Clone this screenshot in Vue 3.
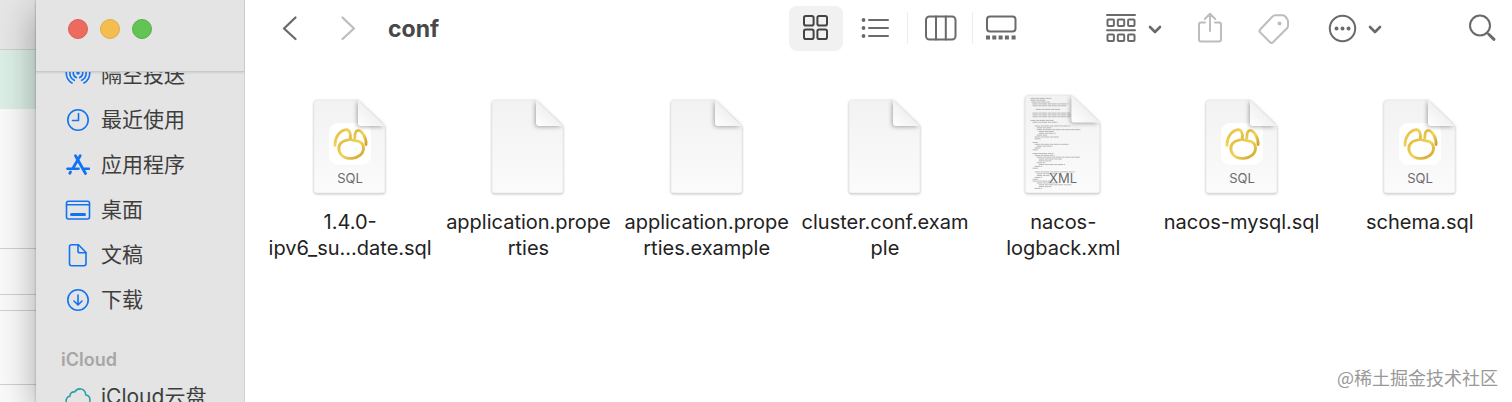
<template>
  <div class="desktop">
    <div class="behind">
      <div class="behind-title"></div>
      <div class="behind-banner"></div>
      <div class="behind-row tall"></div>
      <div class="behind-row"></div>
      <div class="behind-row thin"></div>
      <div class="behind-row mid"></div>
    </div>

    <div class="window">
      <aside class="sidebar">
        <div class="traffic">
          <button class="dot red" aria-label="关闭"></button>
          <button class="dot yellow" aria-label="最小化"></button>
          <button class="dot green" aria-label="缩放"></button>
        </div>
        <nav class="places">
          <a v-for="place in places" :key="place.name" class="place" href="#">
            <svg class="place-icon" viewBox="0 0 26 26">
              <path v-for="p in place.paths" :key="p.d" :d="p.d" :stroke-width="p.w || 1.6" />
            </svg>
            <span>{{ place.name }}</span>
          </a>
          <h2 class="section">iCloud</h2>
          <a class="place" href="#">
            <svg class="place-icon cloud" viewBox="0 0 26 26">
              <path
                stroke-width="1.6"
                d="M6.5 21C2.5 21 .8 18.5 1.2 16C1.5 13.5 3.8 12.2 5 12.3C4.8 9.5 7 7.5 9.8 8C11 5.5 13.5 4.6 16 5C19.3 5.6 20.6 8 20.8 11C23.5 11.3 25 13.4 25 16C25 19 22.8 21 20 21Z"
              />
            </svg>
            <span>iCloud云盘</span>
          </a>
        </nav>
      </aside>

      <main class="content">
        <header class="toolbar">
          <button class="tool" aria-label="返回">
            <svg width="36" height="36" viewBox="0 0 36 36"><path stroke-width="2.3" d="M23.5 7.5L12 18.5L23.5 29" /></svg>
          </button>
          <button class="tool disabled forward" aria-label="前进">
            <svg width="36" height="36" viewBox="0 0 36 36"><path stroke-width="2.3" d="M12.5 7.5L24 18.5L12.5 29" /></svg>
          </button>
          <h1 class="title">conf</h1>

          <div class="views">
            <button class="tool view active" aria-label="图标">
              <svg width="36" height="36" viewBox="0 0 36 36">
                <rect x="6" y="6" width="9.6" height="9.6" rx="1.8" />
                <rect x="19.4" y="6" width="9.6" height="9.6" rx="1.8" />
                <rect x="6" y="19.4" width="9.6" height="9.6" rx="1.8" />
                <rect x="19.4" y="19.4" width="9.6" height="9.6" rx="1.8" />
              </svg>
            </button>
            <button class="tool view" aria-label="列表">
              <svg width="36" height="36" viewBox="0 0 36 36">
                <path d="M12 10H31M12 18H31M12 26H31" />
                <path stroke-width="3.8" d="M6.5 10h.01M6.5 18h.01M6.5 26h.01" />
              </svg>
            </button>
            <span class="divider"></span>
            <button class="tool view" aria-label="分栏">
              <svg width="36" height="36" viewBox="0 0 36 36">
                <rect x="4" y="6.5" width="29.5" height="23" rx="3.5" />
                <path d="M14 6.5V29.5M23.8 6.5V29.5" />
              </svg>
            </button>
            <span class="divider"></span>
            <button class="tool view gallery" aria-label="画廊">
              <svg width="36" height="36" viewBox="0 0 36 36">
                <rect x="4" y="6.5" width="28.5" height="15" rx="3" />
                <path class="square" stroke-width="4" d="M3 27.5h4M9.3 27.5h4M15.6 27.5h4M21.9 27.5h4M28.6 27.5h4" />
              </svg>
            </button>
          </div>

          <div class="actions">
            <button class="tool menu" aria-label="分组">
              <svg width="30" height="36" viewBox="0 0 30 36">
                <path d="M1 5H29M1 20.3H29" />
                <rect x="1.5" y="9.5" width="6.4" height="6.6" rx="1" />
                <rect x="11.8" y="9.5" width="6.4" height="6.6" rx="1" />
                <rect x="22.1" y="9.5" width="6.4" height="6.6" rx="1" />
                <rect x="1.5" y="24.5" width="6.4" height="6.6" rx="1" />
                <rect x="11.8" y="24.5" width="6.4" height="6.6" rx="1" />
                <rect x="22.1" y="24.5" width="6.4" height="6.6" rx="1" />
              </svg>
              <svg width="14" height="36" viewBox="0 0 14 36"><path stroke-width="2.6" d="M2 17L7 22L12 17" /></svg>
            </button>
            <button class="tool disabled" aria-label="共享">
              <svg width="32" height="36" viewBox="0 0 32 36">
                <path d="M11 12.5H7Q5 12.5 5 14.5V29.5Q5 31.5 7 31.5H25Q27 31.5 27 29.5V14.5Q27 12.5 25 12.5H21M16 21V4M10.8 9L16 3.7L21.2 9" />
              </svg>
            </button>
            <button class="tool disabled" aria-label="标签">
              <svg width="32" height="36" viewBox="0 0 32 36">
                <path d="M17 5.2H25Q26 5.2 27 6.2L29.2 9.2Q30 10.2 30 11.5V15.8Q30 17.2 29 18.2L15 32.2Q13.5 33.6 12 32.2L2.2 22.4Q.8 21 2.2 19.5L14.5 6.5Q15.5 5.2 17 5.2Z" />
                <path stroke-width="4" d="M21.5 13.5h.01" />
              </svg>
            </button>
            <button class="tool menu more" aria-label="更多">
              <svg width="30" height="36" viewBox="0 0 30 36">
                <circle cx="14.5" cy="18.5" r="12.7" />
                <path stroke-width="4" d="M8.5 18.5h.01M14.5 18.5h.01M20.5 18.5h.01" />
              </svg>
              <svg width="14" height="36" viewBox="0 0 14 36"><path stroke-width="2.6" d="M2 17L7 22L12 17" /></svg>
            </button>
            <button class="tool search" aria-label="搜索">
              <svg width="36" height="36" viewBox="0 0 36 36">
                <circle cx="16" cy="15.5" r="10" />
                <path d="M23.2 22.8L25 24.5" />
                <path stroke-width="3" d="M25 24.5L30 29.3" />
              </svg>
            </button>
          </div>
        </header>

        <ul class="files">
          <li v-for="file in files" :key="file.lines.join('')" class="file">
            <svg class="file-icon" viewBox="0 0 80 100">
              <defs>
                <linearGradient id="paper" x1="0" y1="0" x2="0" y2="1">
                  <stop offset="0" stop-color="#f2f2f2" />
                  <stop offset="1" stop-color="#fbfbfb" />
                </linearGradient>
                <linearGradient id="fold" x1="0" y1="1" x2="0.6" y2="0.4">
                  <stop offset="0" stop-color="#ffffff" />
                  <stop offset="1" stop-color="#eeeeee" />
                </linearGradient>
                <linearGradient id="gold" x1="0" y1="0" x2="1" y2="1">
                  <stop offset="0" stop-color="#e0b840" />
                  <stop offset="0.5" stop-color="#f0d458" />
                  <stop offset="1" stop-color="#cf9f30" />
                </linearGradient>
              </defs>
              <g :class="{ big: file.kind === 'XML' }">
                <path class="paper" d="M7 4H47.5L75 30V94.5Q75 97 72.5 97H6.5Q4 97 4 94.5V7Q4 4 7 4Z" />
                <template v-if="file.kind === 'XML'">
                  <path v-for="(row, i) in codeRows" :key="i" class="code" :d="`M${row[0]} ${7 + i * 1.75}h${row[1]}`" />
                </template>
                <template v-if="file.kind === 'SQL'">
                  <rect class="tile" x="19" y="27" width="42" height="42" rx="9" />
                  <path class="paw" d="M25 49.3C24.8 42 29.5 34.5 35.5 33.8C39.6 33.4 40.8 37 40.3 43" />
                  <path class="paw" d="M44.8 42C44.8 38 46 34.4 48.3 34.4C51.5 34.6 56.8 42 56 48.5" />
                  <path class="paw" d="M40.3 43.2C37.5 44.6 33.5 43.8 30.6 47.3C27 52 29.2 58.2 34 60.9C38.5 63.2 45.5 62.8 49.8 59.4C54.2 55.8 54.6 50.3 51.5 47C48.3 43.8 44 45.2 40.3 43.2Z" />
                </template>
                <path class="fold" d="M48 4L75 30H51Q48 30 48 27Z" />
              </g>
              <text v-if="file.kind" class="kind" x="40" y="87">{{ file.kind }}</text>
            </svg>
            <p class="name">
              <span v-for="line in file.lines" :key="line">{{ line }}</span>
            </p>
          </li>
        </ul>
        <p class="watermark">@稀土掘金技术社区</p>
      </main>
    </div>
  </div>
</template>

<script setup>
const places = [
  {
    name: "隔空投送",
    paths: [
      { d: "M7 21A11.6 11.6 0 0 1 7 1M19 1A11.6 11.6 0 0 1 19 21" },
      { d: "M9.3 18.3A8.2 8.2 0 0 1 9.3 3.7M16.7 3.7A8.2 8.2 0 0 1 16.7 18.3" },
      { d: "M11.3 15.6A5 5 0 0 1 11.3 6.4M14.7 6.4A5 5 0 0 1 14.7 15.6" },
      { d: "M13 11h.01", w: 3.4 },
    ],
  },
  {
    name: "最近使用",
    paths: [
      { d: "M23.2 13A10.2 10.2 0 1 1 2.8 13A10.2 10.2 0 1 1 23.2 13Z" },
      { d: "M13.5 6.5V13.5H7.5" },
    ],
  },
  {
    name: "应用程序",
    paths: [
      { d: "M10.5 3.8L20.5 21.5M15.2 3.8L7.8 16.5M5.5 20L4.8 21.2", w: 2.8 },
      { d: "M2.5 16.8H13.5M19 16.8H23.8", w: 2.6 },
    ],
  },
  {
    name: "桌面",
    paths: [
      { d: "M3.5 4.2H22.5Q24.5 4.2 24.5 6.2V20Q24.5 22 22.5 22H3.5Q1.5 22 1.5 20V6.2Q1.5 4.2 3.5 4.2Z" },
      { d: "M1.5 7.8H24.5" },
      { d: "M6.5 17.6H19.5", w: 3 },
    ],
  },
  {
    name: "文稿",
    paths: [
      { d: "M6.5 2.7H13.5L21 10.5V21.5Q21 23.7 19 23.7H6.5Q4.5 23.7 4.5 21.5V4.7Q4.5 2.7 6.5 2.7Z" },
      { d: "M13 3V9Q13 10.8 14.8 10.8H20.5" },
    ],
  },
  {
    name: "下载",
    paths: [
      { d: "M23.2 13A10.2 10.2 0 1 1 2.8 13A10.2 10.2 0 1 1 23.2 13Z" },
      { d: "M13 8V17.8M9 14L13 18L17 14" },
    ],
  },
];

const files = [
  { kind: "SQL", lines: ["1.4.0-", "ipv6_su…date.sql"] },
  { kind: "", lines: ["application.prope", "rties"] },
  { kind: "", lines: ["application.prope", "rties.example"] },
  { kind: "", lines: ["cluster.conf.exam", "ple"] },
  { kind: "XML", lines: ["nacos-", "logback.xml"] },
  { kind: "SQL", lines: ["nacos-mysql.sql"] },
  { kind: "SQL", lines: ["schema.sql"] },
];

// [indent, length] of each tiny line on the xml preview
const codeRows = [
  [9, 20], [9, 14], [10, 18], [11, 34], [11, 32], [11, 0], [14, 23], [14, 0],
  [11, 36], [11, 38], [11, 36], [9, 0], [9, 22], [11, 24], [9, 0], [13, 34],
  [15, 14], [15, 42], [17, 14], [17, 16], [15, 10], [13, 23], [13, 6], [9, 0],
  [11, 5], [13, 33], [15, 15], [13, 6], [11, 5], [9, 0], [11, 20], [13, 19],
  [15, 41], [17, 22], [17, 12], [15, 8], [17, 25], [13, 7], [11, 5], [11, 0],
  [13, 38], [15, 18], [15, 12], [13, 7], [11, 6], [11, 18], [15, 20], [17, 31],
  [17, 12], [13, 7],
];
</script>

<style>
body {
  overflow: hidden;
}
</style>

<style scoped>
.desktop {
  display: flex;
  height: 100vh;
  overflow: hidden;
  background: #fafafa;
  font-family: Inter, "Noto Sans CJK SC", sans-serif;
}
h1,
h2,
p,
ul {
  margin: 0;
  padding: 0;
}
button {
  border: 0;
  padding: 0;
  background: none;
}
svg {
  display: block;
  flex: none;
}
.behind {
  flex: none;
  width: 36px;
}
.behind div {
  box-sizing: border-box;
  border-bottom: 1px solid #cfcfcf;
}
.behind .behind-title {
  height: 50px;
  background: #e6e6e6;
}
.behind .behind-banner {
  height: 59px;
  background: #dcefe6;
  border-bottom: 0;
}
.behind-row {
  height: 46px;
}
.behind .tall {
  height: 140px;
}
.behind .thin {
  height: 16px;
}
.behind .mid {
  height: 74px;
}
.window {
  position: relative;
  flex: 1;
  min-width: 0;
  display: flex;
  box-shadow: 0 0 2px rgba(0, 0, 0, 0.3), 0 10px 36px rgba(0, 0, 0, 0.34);
}
.sidebar {
  flex: none;
  display: flex;
  flex-direction: column;
  box-sizing: border-box;
  width: 209px;
  background: #e4e4e4;
  border-right: 1px solid #d2d2d2;
}
.traffic {
  flex: none;
  display: flex;
  gap: 12px;
  box-sizing: border-box;
  height: 72px;
  padding: 19px 32px;
  border-bottom: 1px solid #c9c9c9;
  box-shadow: 0 1px 2px rgba(0, 0, 0, 0.1);
}
.dot {
  box-sizing: border-box;
  width: 20px;
  height: 20px;
  border-radius: 50%;
}
.red {
  background: #ec6a5e;
  border: 1px solid #dc5f55;
}
.yellow {
  background: #f4bd4f;
  border: 1px solid #e2ab45;
}
.green {
  background: #61c454;
  border: 1px solid #55b149;
}
.places {
  flex: 1;
  min-height: 0;
  overflow: hidden;
}
.place {
  display: flex;
  align-items: center;
  gap: 10px;
  height: 45px;
  padding-left: 29px;
  color: #3e3e3e;
  font-size: 21px;
  line-height: 30px;
  text-decoration: none;
}
.place:first-child {
  margin-top: -20px;
}
.place-icon {
  width: 26px;
  height: 26px;
  fill: none;
  stroke: #1273f2;
  stroke-linecap: round;
  stroke-linejoin: round;
}
.cloud {
  stroke: #2c9fa8;
}
.section {
  margin-top: 24px;
  padding-left: 25px;
  color: #a6a6a6;
  font-size: 18px;
  font-weight: 600;
  line-height: 28px;
}
.content {
  flex: 1;
  min-width: 0;
  background: #fff;
}
.toolbar {
  display: flex;
  align-items: center;
  height: 56px;
  padding: 0 12px 0 27px;
}
.tool {
  display: flex;
  align-items: center;
  justify-content: center;
}
.tool svg {
  fill: none;
  stroke: #6a6a6a;
  stroke-width: 2;
  stroke-linecap: round;
  stroke-linejoin: round;
}
.tool.disabled svg {
  stroke: #bdbdbd;
}
.tool .square {
  stroke-linecap: butt;
}
.forward {
  margin: 0 22px;
}
.title {
  padding-top: 2px;
  color: #484848;
  font-size: 23px;
  font-weight: 700;
  line-height: 32px;
}
.views {
  display: flex;
  align-items: center;
  gap: 5px;
  margin-left: auto;
}
.view {
  width: 54px;
  height: 45px;
  border-radius: 8px;
}
.view.active {
  background: #f1f1f1;
}
.view.active svg {
  stroke: #444;
}
.gallery {
  width: 46px;
}
.divider {
  width: 1px;
  height: 32px;
  background: #ececec;
}
.actions {
  display: flex;
  align-items: center;
  gap: 32px;
  margin-left: 82px;
}
.menu {
  gap: 12px;
}
.more {
  gap: 10px;
  margin-left: 6px;
}
.search {
  margin-left: 50px;
}
.files {
  display: grid;
  grid-template-columns: repeat(7, 1fr);
  padding: 40px 3px 0 16px;
  list-style: none;
}
.file {
  display: flex;
  flex-direction: column;
  align-items: center;
}
.file-icon {
  width: 80px;
  height: 100px;
  overflow: visible;
}
.big {
  transform: scale(1.05);
  transform-origin: 40px 99px;
}
.paper {
  fill: url(#paper);
  stroke: #e6e6e6;
  stroke-width: 0.6;
  filter: drop-shadow(0 1px 1px rgba(0, 0, 0, 0.24));
}
.fold {
  fill: url(#fold);
  filter: drop-shadow(-1px 1px 2px rgba(0, 0, 0, 0.32));
}
.tile {
  fill: #fff;
}
.paw {
  fill: none;
  stroke: url(#gold);
  stroke-width: 2.8;
  stroke-linecap: round;
  stroke-linejoin: round;
}
.code {
  stroke: #a2a2a2;
  stroke-width: 0.7;
  stroke-dasharray: 5 0.6 3 0.4;
}
.kind {
  fill: #6c6c6c;
  font-size: 13px;
  text-anchor: middle;
}
.name {
  margin-top: 13px;
  color: #222;
  font-size: 20px;
  line-height: 26px;
  text-align: center;
}
.name span {
  display: block;
}
.watermark {
  position: absolute;
  right: 14px;
  bottom: 12px;
  color: #999;
  font-family: "Noto Sans CJK SC", sans-serif;
  font-size: 18px;
  line-height: 26px;
}
</style>
